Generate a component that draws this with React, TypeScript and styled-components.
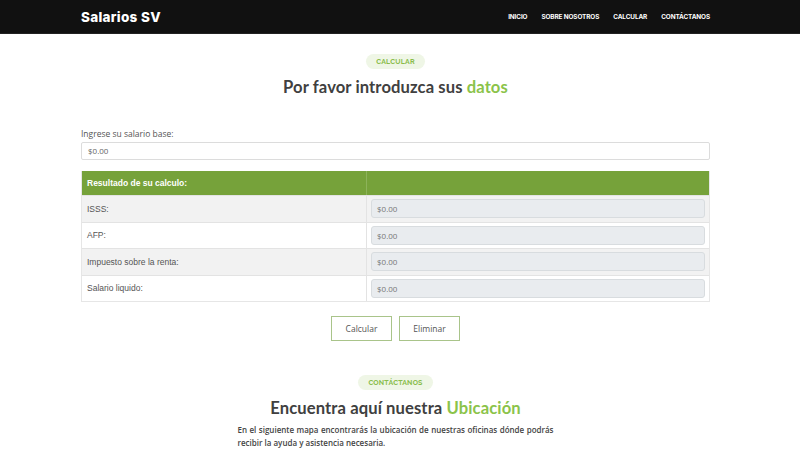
import React from "react";
import styled, { createGlobalStyle } from "styled-components";

const Global = createGlobalStyle`
  html, body { margin: 0; padding: 0; background: #fff; }
  body { font-family: "Open Sans", "Liberation Sans", sans-serif; color: #444; }
  * { box-sizing: border-box; }
`;

const Page = styled.div`
  width: 791px;
`;

const Header = styled.header`
  height: 34px;
  background: #111111;
  border-bottom: 1px solid #222;
  width: 800px;
`;

const HeaderInner = styled.div`
  width: 629px;
  margin-left: 81px;
  height: 100%;
  display: flex;
  align-items: center;
  justify-content: space-between;
`;

const Logo = styled.div`
  font-family: "Inter", "Liberation Sans", sans-serif;
  font-weight: 800;
  font-size: 13.5px;
  color: #fff;
  letter-spacing: 0.3px;
`;

const Nav = styled.nav`
  display: flex;
  gap: 14px;
`;

const NavLink = styled.a`
  font-family: "Inter", "Liberation Sans", sans-serif;
  font-size: 6.4px;
  font-weight: 700;
  color: #fff;
  text-transform: uppercase;
  letter-spacing: -0.1px;
  text-decoration: none;
`;

const Section = styled.section<{ $pt: number }>`
  width: 629px;
  margin: 0 auto;
  padding-top: ${(p) => p.$pt}px;
  display: flex;
  flex-direction: column;
  align-items: center;
`;

const Badge = styled.span`
  display: inline-block;
  background: #eff6e6;
  color: #8abd4c;
  font-family: "Raleway", "Open Sans", sans-serif;
  font-weight: 700;
  font-size: 7px;
  line-height: 15px;
  padding: 0 10px;
  border-radius: 8px;
  letter-spacing: 0.2px;
`;

const Title = styled.h2<{ $mt: number }>`
  margin: ${(p) => p.$mt}px 0 0;
  font-family: "Lato", "Open Sans", sans-serif;
  font-weight: 700;
  font-size: 16.6px;
  line-height: 22px;
  color: #404040;
  letter-spacing: 0.1px;
`;

const Accent = styled.span`
  color: #8bc34a;
`;

const Form = styled.div`
  align-self: stretch;
  margin-top: 30px;
`;

const Label = styled.label`
  display: block;
  font-size: 8.5px;
  color: #555;
  line-height: 12px;
  margin-bottom: 2px;
`;

const BaseInput = styled.div`
  height: 18px;
  border: 1px solid #dcdcdc;
  border-radius: 2px;
  padding: 0 6px;
  font-size: 8px;
  line-height: 16px;
  color: #666;
`;

const Table = styled.div`
  margin-top: 11px;
  border: 1px solid #e6e6e6;
  border-top: none;
  font-family: "Liberation Sans", Arial, sans-serif;
`;

const Row = styled.div<{ $head?: boolean; $striped?: boolean }>`
  display: grid;
  grid-template-columns: 284px 1fr;
  height: ${(p) => (p.$head ? 24 : 26.5)}px;
  background: ${(p) => (p.$head ? "#76a23a" : p.$striped ? "#f2f2f2" : "#fff")};
  border-top: ${(p) => (p.$head ? "none" : "1px solid #e3e3e3")};
`;

const Cell = styled.div<{ $head?: boolean; $right?: boolean }>`
  display: flex;
  align-items: center;
  padding: 0 ${(p) => (p.$right ? 4 : 5)}px;
  font-size: 8.5px;
  color: ${(p) => (p.$head ? "#fff" : "#555")};
  font-weight: ${(p) => (p.$head ? 700 : 400)};
  border-left: ${(p) => (p.$right ? `1px solid ${p.$head ? "#8db35a" : "#e3e3e3"}` : "none")};
`;

const ReadOnly = styled.div`
  flex: 1;
  height: 19px;
  background: #e9ecef;
  border: 1px solid #d8dcdf;
  border-radius: 3px;
  padding: 0 5px;
  font-size: 8px;
  line-height: 17px;
  color: #777;
  font-family: "Open Sans", sans-serif;
`;

const Buttons = styled.div`
  display: flex;
  gap: 7px;
  margin-top: 14px;
`;

const Button = styled.button`
  width: 61px;
  height: 25px;
  background: #fff;
  border: 1px solid #a9c48a;
  font-family: "Open Sans", sans-serif;
  font-size: 8.5px;
  color: #555;
  padding: 0;
`;

const Paragraph = styled.p`
  width: 316px;
  margin: 4px 0 0;
  font-size: 8px;
  font-weight: 600;
  line-height: 13px;
  color: #444;
  text-align: justify;
`;

const rows = ["ISSS:", "AFP:", "Impuesto sobre la renta:", "Salario liquido:"];

export default function App() {
  return (
    <Page>
      <Global />
      <Header>
        <HeaderInner>
          <Logo>Salarios SV</Logo>
          <Nav>
            <NavLink>Inicio</NavLink>
            <NavLink>Sobre nosotros</NavLink>
            <NavLink>Calcular</NavLink>
            <NavLink>Contáctanos</NavLink>
          </Nav>
        </HeaderInner>
      </Header>
      <Section $pt={20}>
        <Badge>CALCULAR</Badge>
        <Title $mt={7}>
          Por favor introduzca sus <Accent>datos</Accent>
        </Title>
        <Form>
          <Label>Ingrese su salario base:</Label>
          <BaseInput>$0.00</BaseInput>
          <Table>
            <Row $head>
              <Cell $head>Resultado de su calculo:</Cell>
              <Cell $head $right />
            </Row>
            {rows.map((r, i) => (
              <Row key={r} $striped={i % 2 === 0}>
                <Cell>{r}</Cell>
                <Cell $right>
                  <ReadOnly>$0.00</ReadOnly>
                </Cell>
              </Row>
            ))}
          </Table>
        </Form>
        <Buttons>
          <Button>Calcular</Button>
          <Button>Eliminar</Button>
        </Buttons>
      </Section>
      <Section $pt={34}>
        <Badge>CONTÁCTANOS</Badge>
        <Title $mt={7}>
          Encuentra aquí nuestra <Accent>Ubicación</Accent>
        </Title>
        <Paragraph>
          En el siguiente mapa encontrarás la ubicación de nuestras oficinas dónde podrás recibir la ayuda y asistencia necesaria.
        </Paragraph>
      </Section>
    </Page>
  );
}
